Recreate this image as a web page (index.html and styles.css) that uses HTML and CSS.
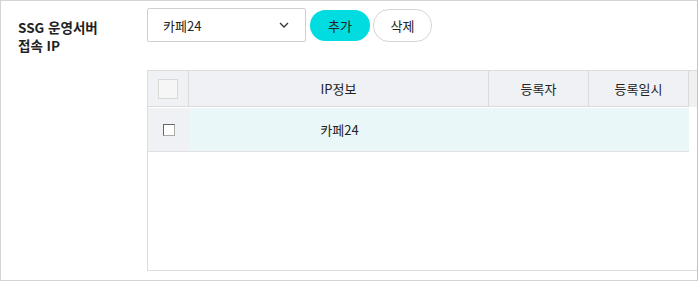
FILE: index.html
```html
<!DOCTYPE html>
<html lang="ko">
<head>
    <meta charset="UTF-8">
    <title>SSG 운영서버 접속 IP</title>
    <link rel="stylesheet" href="styles.css">
</head>
<body>
    <div class="panel">
        <div class="field-label">SSG 운영서버<br>접속 IP</div>
        <div class="field-body">
            <div class="controls">
                <div class="select">
                    <span>카페24</span>
                    <svg class="chevron" width="10" height="6" viewBox="0 0 10 6">
                        <path d="M1 1 L5 5 L9 1" fill="none" stroke="#333" stroke-width="1.3"/>
                    </svg>
                </div>
                <button class="btn btn-add">추가</button>
                <button class="btn btn-del">삭제</button>
            </div>

            <div class="grid">
                <div class="grid-head">
                    <div class="cell col-check"><span class="check-head"></span></div>
                    <div class="cell col-ip">IP정보</div>
                    <div class="cell col-user">등록자</div>
                    <div class="cell col-date">등록일시</div>
                    <div class="gutter"></div>
                </div>
                <div class="grid-row">
                    <div class="cell col-check"><span class="check"></span></div>
                    <div class="row-data">
                        <div class="cell col-ip">카페24</div>
                        <div class="cell col-user"></div>
                        <div class="cell col-date"></div>
                    </div>
                </div>
            </div>
        </div>
    </div>
</body>
</html>
```

FILE: styles.css
```css
* {
    margin: 0;
    padding: 0;
    box-sizing: border-box;
}

body {
    font-family: 'Noto Sans CJK KR', 'Noto Sans', sans-serif;
    font-size: 13px;
    color: #222;
    background: #fff;
}

.panel {
    display: flex;
    width: 698px;
    height: 281px;
    border: 1px solid #d4d4d4;
    border-right-color: #c4c4c4;
    overflow: hidden;
}

.field-label {
    width: 146px;
    padding: 17px 0 0 17px;
    font-size: 13.5px;
    font-weight: bold;
    line-height: 18px;
    color: #222;
}

.field-body {
    flex: 1;
    padding-top: 7px;
}

.controls {
    display: flex;
    align-items: center;
    gap: 3px;
    height: 34px;
}

.select {
    display: flex;
    align-items: center;
    justify-content: space-between;
    width: 159px;
    height: 34px;
    padding: 0 16px 0 15px;
    border: 1px solid #cfcfcf;
    border-radius: 2px;
    font-size: 13px;
}

.chevron {
    display: block;
}

.btn {
    font-family: inherit;
    font-size: 13px;
    color: #222;
    border-radius: 16px;
    cursor: pointer;
}

.btn-add {
    width: 60px;
    height: 31px;
    margin-left: 1px;
    background: #00dcdf;
    border: none;
}

.btn-del {
    width: 59px;
    height: 33px;
    background: #fff;
    border: 1px solid #d6d6d6;
}

.grid {
    margin-top: 28px;
    height: 201px;
    border: 1px solid #dcdcdc;
    border-right: none;
}

.grid-head {
    display: flex;
    height: 36px;
    background: #f0f0f0;
}

.grid-head .cell {
    display: flex;
    align-items: center;
    justify-content: center;
    background: #f0f1f5;
    border-right: 1px solid #dadada;
    border-bottom: 1px solid #dadada;
    height: 36px;
}

.col-check {
    width: 41px;
}

.col-ip {
    width: 300px;
}

.col-user {
    width: 100px;
}

.col-date {
    width: 100px;
}

.gutter {
    flex: 1;
}

.check-head {
    width: 20px;
    height: 20px;
    background: #f6f6f6;
    border: 1px solid #d8d8d8;
}

.grid-row {
    display: flex;
    height: 44px;
    margin-top: 1px;
}

.grid-row .col-check {
    display: flex;
    align-items: center;
    justify-content: center;
    background: #f0f1f5;
    border-bottom: 1px solid #e0e0e0;
    padding-left: 1px;
}

.check {
    width: 12px;
    height: 12px;
    background: #fff;
    border: 1px solid #aaa;
    border-top-color: #666;
    border-left-color: #666;
}

.row-data {
    display: flex;
    background: #eaf7f8;
    border-bottom: 1px solid #e0e0e0;
}

.row-data .cell {
    display: flex;
    align-items: center;
    justify-content: center;
}

.row-data .col-ip {
    width: 301px;
}

.row-data .col-date {
    width: 99px;
}
```
